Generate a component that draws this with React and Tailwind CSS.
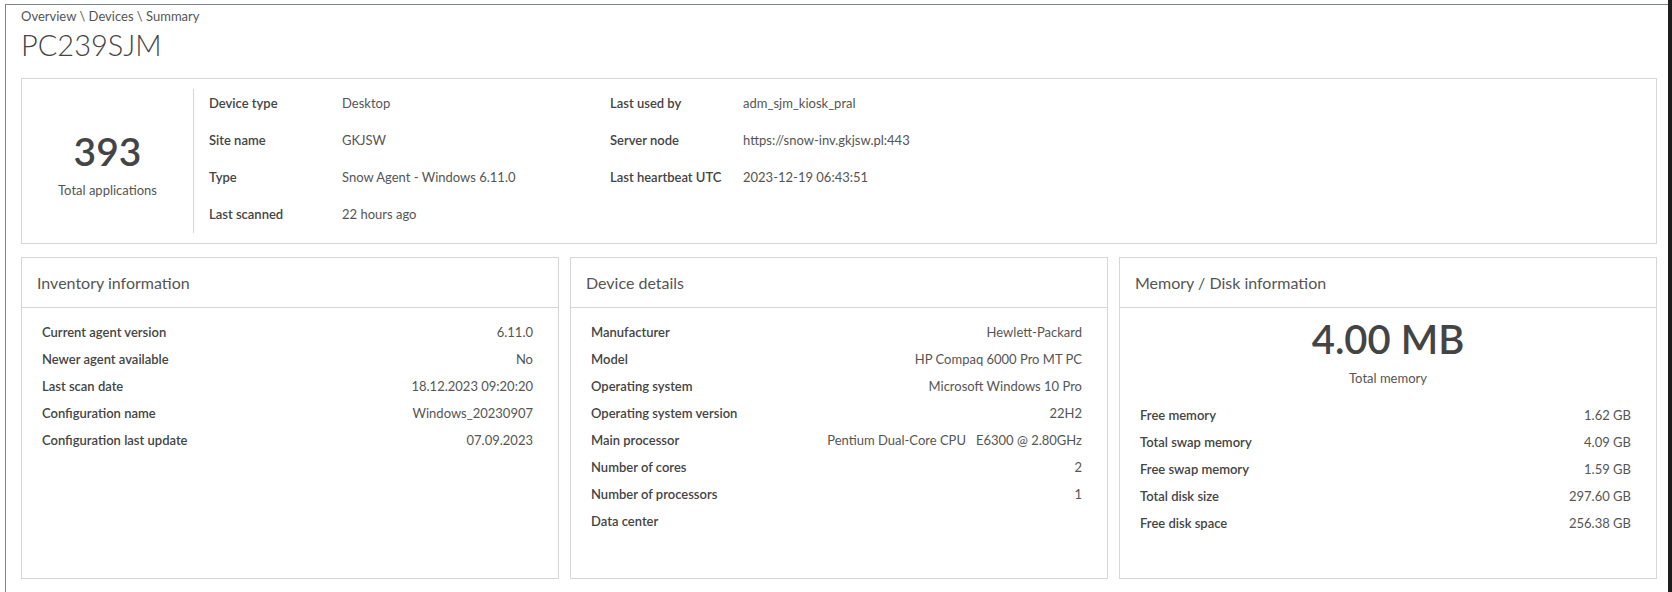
const summaryLeft = [
  ['Device type', 'Desktop'],
  ['Site name', 'GKJSW'],
  ['Type', 'Snow Agent - Windows 6.11.0'],
  ['Last scanned', '22 hours ago'],
]

const summaryRight = [
  ['Last used by', 'adm_sjm_kiosk_pral'],
  ['Server node', 'https://snow-inv.gkjsw.pl:443'],
  ['Last heartbeat UTC', '2023-12-19 06:43:51'],
]

const inventory = [
  ['Current agent version', '6.11.0'],
  ['Newer agent available', 'No'],
  ['Last scan date', '18.12.2023 09:20:20'],
  ['Configuration name', 'Windows_20230907'],
  ['Configuration last update', '07.09.2023'],
]

const device = [
  ['Manufacturer', 'Hewlett-Packard'],
  ['Model', 'HP Compaq 6000 Pro MT PC'],
  ['Operating system', 'Microsoft Windows 10 Pro'],
  ['Operating system version', '22H2'],
  ['Main processor', 'Pentium Dual-Core CPU   E6300 @ 2.80GHz'],
  ['Number of cores', '2'],
  ['Number of processors', '1'],
  ['Data center', ''],
]

const memory = [
  ['Free memory', '1.62 GB'],
  ['Total swap memory', '4.09 GB'],
  ['Free swap memory', '1.59 GB'],
  ['Total disk size', '297.60 GB'],
  ['Free disk space', '256.38 GB'],
]

function SummaryColumn({ rows, className }) {
  return (
    <div className={`flex flex-col gap-[19px] ${className}`}>
      {rows.map(([label, value]) => (
        <div key={label} className="flex h-[18px] items-center">
          <span className="w-[133px] shrink-0 font-semibold text-[#444]">{label}</span>
          <span className="text-[#555]">{value}</span>
        </div>
      ))}
    </div>
  )
}

function Card({ title, children }) {
  return (
    <div className="h-[322px] border border-[#d6d6d6]">
      <div className="flex h-[50px] items-center border-b border-[#d6d6d6] px-[15px] text-[16px] text-[#555]">
        {title}
      </div>
      {children}
    </div>
  )
}

function Rows({ rows }) {
  return (
    <div className="flex flex-col pl-[20px] pr-[25px]">
      {rows.map(([label, value]) => (
        <div key={label} className="flex h-[27px] items-center justify-between">
          <span className="font-semibold text-[#444]">{label}</span>
          <span className="whitespace-pre text-[#555]">{value}</span>
        </div>
      ))}
    </div>
  )
}

export default function App() {
  return (
    <div className="flex h-screen bg-white font-['Lato',sans-serif] text-[13px] leading-[18px]">
      <div className="flex-1 pl-[5px] pt-[4px]">
        <div className="h-full border-l border-t border-[#80858c] pl-[15px] pr-[11px] pt-[2px]">
          <div className="text-[#555]">Overview \ Devices \ Summary</div>
          <h1 className="h-[40px] text-[29px] font-light leading-[40px] text-[#444]">PC239SJM</h1>

          <div className="mt-[13px] flex h-[166px] border border-[#d6d6d6] py-[10px]">
            <div className="flex w-[171px] shrink-0 flex-col items-center justify-center pt-[9px]">
              <div className="text-[39px] font-semibold leading-[39px] text-[#444]">393</div>
              <div className="mt-[10px] text-[#555]">Total applications</div>
            </div>
            <div className="flex flex-1 border-l border-[#d6d6d6] pl-[15px] pt-[5px]">
              <SummaryColumn rows={summaryLeft} className="w-[401px]" />
              <SummaryColumn rows={summaryRight} className="flex-1" />
            </div>
          </div>

          <div className="mt-[13px] grid grid-cols-3 gap-[11px]">
            <Card title="Inventory information">
              <div className="pt-[10px]">
                <Rows rows={inventory} />
              </div>
            </Card>
            <Card title="Device details">
              <div className="pt-[10px]">
                <Rows rows={device} />
              </div>
            </Card>
            <Card title="Memory / Disk information">
              <div className="flex flex-col items-center pt-[12px]">
                <div className="text-[40px] font-semibold leading-[39px] text-[#444]">4.00 MB</div>
                <div className="mt-[10px] text-[#555]">Total memory</div>
              </div>
              <div className="pt-[14px]">
                <Rows rows={memory} />
              </div>
            </Card>
          </div>
        </div>
      </div>
      <div className="w-[4px] shrink-0 bg-[#1e1e1e]" />
    </div>
  )
}
